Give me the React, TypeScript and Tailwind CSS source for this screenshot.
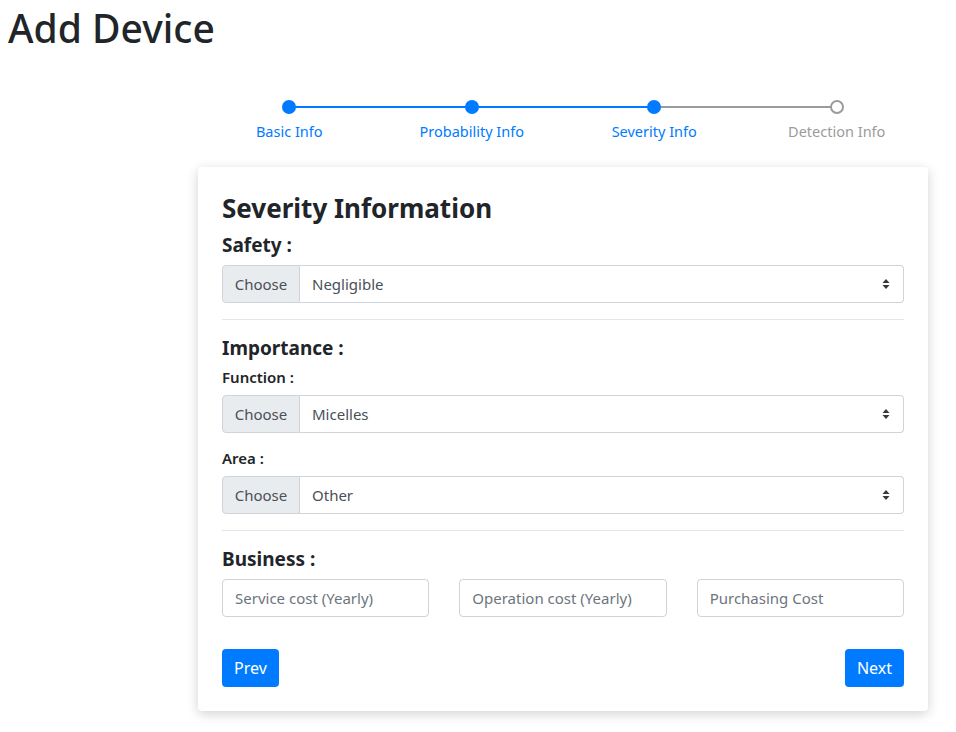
import React from "react";

const steps = [
  { label: "Basic Info", done: true },
  { label: "Probability Info", done: true },
  { label: "Severity Info", done: true },
  { label: "Detection Info", done: false },
];

function Arrows() {
  return (
    <svg width="8" height="12" viewBox="0 0 8 12" className="shrink-0">
      <path d="M4 1 L7.5 5 H0.5 Z" fill="#343a40" />
      <path d="M4 11 L7.5 7 H0.5 Z" fill="#343a40" />
    </svg>
  );
}

function SelectGroup({ value }: { value: string }) {
  return (
    <div className="flex h-[38px] w-full">
      <div className="flex w-[78px] items-center justify-center bg-[#e9ecef] border border-[#ced4da] rounded-l-[4px] text-[15px] text-[#495057]">
        Choose
      </div>
      <div className="flex flex-1 items-center justify-between border border-l-0 border-[#ced4da] rounded-r-[4px] bg-white pl-3 pr-[13px] text-[15px] text-[#495057]">
        <span>{value}</span>
        <Arrows />
      </div>
    </div>
  );
}

function Input({ placeholder }: { placeholder: string }) {
  return (
    <div className="flex h-[38px] items-center border border-[#ced4da] rounded-[4px] bg-white px-3 text-[15px] text-[#6c757d]">
      {placeholder}
    </div>
  );
}

export default function App() {
  return (
    <div
      className="min-h-[732px] bg-white text-[#212529]"
      style={{ fontFamily: '"Segoe UI", "Noto Sans", "Open Sans", sans-serif' }}
    >
      <h1 className="pl-[8px] pt-[4px] text-[39px] leading-[48px] font-medium">Add Device</h1>

      <div className="pl-[198px] pr-[28px]">
        <div className="mt-[48px] grid grid-cols-4">
          {steps.map((s, i) => {
            const next = steps[i + 1];
            return (
              <div key={s.label} className="relative flex flex-col items-center">
                {next && (
                  <div
                    className={
                      next.done
                        ? "absolute left-1/2 top-[6px] h-[2px] w-full bg-[#007bff]"
                        : "absolute left-1/2 top-[6px] h-[2px] w-full bg-[#9b9b9b]"
                    }
                  />
                )}
                <div
                  className={
                    s.done
                      ? "relative z-10 h-[14px] w-[14px] rounded-full bg-[#007bff]"
                      : "relative z-10 h-[14px] w-[14px] rounded-full border-2 border-[#9b9b9b] bg-white"
                  }
                />
                <div
                  className={
                    s.done
                      ? "mt-[6px] text-[14.5px] leading-[22px] text-[#007bff]"
                      : "mt-[6px] text-[14.5px] leading-[22px] text-[#9b9b9b]"
                  }
                >
                  {s.label}
                </div>
              </div>
            );
          })}
        </div>

        <div className="mt-[25px] rounded-[4px] bg-white p-6 shadow-[0_3px_12px_rgba(0,0,0,0.18)]">
          <h3 className="mb-2 text-[26px] leading-[34px] font-bold">Severity Information</h3>
          <h5 className="mb-2 text-[19px] leading-[24px] font-bold">Safety :</h5>
          <SelectGroup value="Negligible" />
          <div className="my-4 h-px bg-[rgba(0,0,0,0.1)]" />
          <h5 className="mb-2 text-[19px] leading-[24px] font-bold">Importance :</h5>
          <h6 className="mb-2 text-[15px] leading-[19px] font-semibold">Function :</h6>
          <div className="mb-4">
            <SelectGroup value="Micelles" />
          </div>
          <h6 className="mb-2 text-[15px] leading-[19px] font-semibold">Area :</h6>
          <SelectGroup value="Other" />
          <div className="my-4 h-px bg-[rgba(0,0,0,0.1)]" />
          <h5 className="mb-2 text-[19px] leading-[24px] font-bold">Business :</h5>
          <div className="grid grid-cols-3 gap-[30px]">
            <Input placeholder="Service cost (Yearly)" />
            <Input placeholder="Operation cost (Yearly)" />
            <Input placeholder="Purchasing Cost" />
          </div>
          <div className="mt-8 flex justify-between">
            <button className="h-[38px] rounded-[4px] bg-[#007bff] px-3 text-[16px] text-white">Prev</button>
            <button className="h-[38px] rounded-[4px] bg-[#007bff] px-3 text-[16px] text-white">Next</button>
          </div>
        </div>
      </div>
    </div>
  );
}
